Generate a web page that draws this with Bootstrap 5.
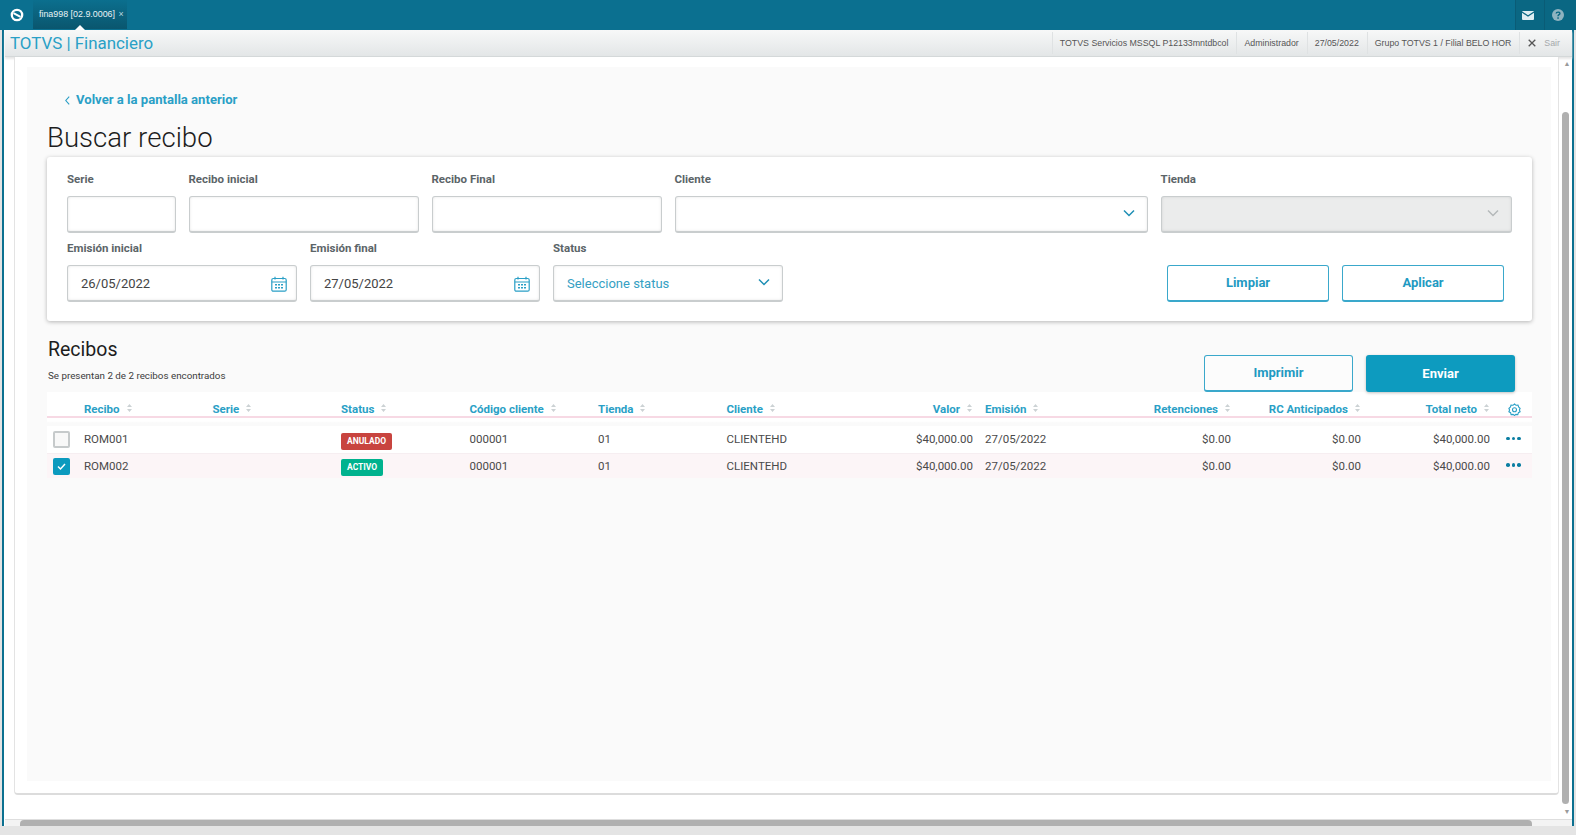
<!DOCTYPE html>
<html lang="es">
<head>
<meta charset="utf-8">
<title>Buscar recibo</title>
<link href="https://cdn.jsdelivr.net/npm/bootstrap@5.3.0/dist/css/bootstrap.min.css" rel="stylesheet">
<style>
html,body{height:100%;overflow:hidden}
body{background:#e4e4e4;font-family:Roboto,sans-serif;color:#444}
.shell{height:835px;width:1576px}
.tealbar{height:30px;background:#0b7090;color:#fff}
.logo-cell{width:33px;height:29px}
.app-tab{position:relative;width:94px;height:29px;background:linear-gradient(#0b6f8e,#0a566e);font:8.9px "Liberation Sans",sans-serif;padding:9px 0 0 6px;white-space:nowrap;color:#e8f2f5}
.app-tab .x{color:#bcd6df;margin-left:1px}
.app-tab::after{content:"";position:absolute;left:42px;bottom:-1px;border:5px solid transparent;border-top:0;border-bottom-color:#fff}
.top-cell{height:30px;background:#0a6783;border-left:1px solid #0a5c76}
.frame{height:796px;margin:0 2px;border-left:2px solid #0b7090;border-right:2px solid #0b7090;background:#fff}
.subbar{height:27px;margin-left:1px;background:linear-gradient(#f7f8f8,#e3e6e7);border-bottom:1px solid #d4d8d9;box-shadow:0 2px 2px #e6e6e6}
.brand{font:16.9px Roboto,sans-serif;color:#29a0c6;padding-left:5px}
.sub-item{font:8.8px "Liberation Sans",sans-serif;color:#555;height:22px;display:flex;align-items:center;border-left:1px solid #dfe2e3;padding:0 8px 0 7px;white-space:nowrap}
.sub-item.sair{color:#a5a9ab;padding:0 12px 0 8px}
.workarea{height:762px}
.outer-card{width:1551px;height:738px;margin-left:10px;background:#fff;border:1px solid #e3e3e3;border-top:0;border-bottom:2px solid #dcdcdc;border-radius:0 0 4px 4px;padding-top:10px;padding-left:12px}
.panel{width:1524px;height:714px;background:#fafafa;padding:21px 0 0 20px}
.back-link{font-size:13.1px;font-weight:700;color:#2a9fc6;padding-left:18px;line-height:24px;text-decoration:none}
.back-link svg{margin-right:6px}
.page-title{font-size:27.6px;font-weight:300;color:#1d1d1d;margin:8px 0 0 0;line-height:36px}
.filter-card{width:1485px;height:164px;margin-top:1px;background:#fff;border-radius:3px;box-shadow:0 1px 4px rgba(0,0,0,.28);padding:12px 20px 0 20px}
.filter-row{--bs-gutter-x:13px;width:1458px;margin:0 0 0 -6.5px}
.lab{font-size:11.5px;font-weight:700;color:#5b6468;line-height:20px;height:27px;margin:0}
.field{position:relative;height:37px;margin-bottom:5px}
.field .form-control{height:37px;border:1px solid #c9cdce;border-bottom-width:2px;border-radius:3px;box-shadow:inset 0 0 3px rgba(0,0,0,.1);font-size:13px;color:#444;padding:0 13px;background:#fff}
.field .form-control:disabled{background:#ebecec}
.field .form-control::placeholder{color:#35a0c3;opacity:1}
.field svg{position:absolute;right:10px;top:11px}
.field svg.chev{right:13px}
.filter-actions{padding-top:27px}
.aplicar{margin:0 8px 0 13px}
.btn-line{width:162px;height:37px;border:1px solid #3aa8cb;border-bottom-width:2px;border-radius:3px;background:#fff;color:#1f9ac2;font-size:13px;font-weight:700;padding:0}
.btn-line:hover{background:#fff;color:#1f9ac2}
.btn-fill{width:149px;height:37px;background:#0d9bbf;border:0;border-radius:3px;color:#fff;font-size:13px;font-weight:700;padding:0;box-shadow:0 1px 3px rgba(0,0,0,.25)}
.btn-fill:hover{background:#0d9bbf;color:#fff}
.list-head{height:71px;width:1468px}
.list-title{font-size:19.5px;font-weight:400;color:#1d1d1d;margin:16px 0 0 1px;line-height:26px}
.list-sub{font-size:9.8px;color:#3c3c3c;margin:6px 0 0 1px;line-height:14px}
.list-btns{margin-top:34px;gap:13px}
.list-btns .btn-line{width:149px;background:#fcfcfc}
.data-table{width:1485px;table-layout:fixed;border-collapse:separate;border-spacing:0;margin:0}
.data-table th{height:26px;background:#fff;border-bottom:2px solid #f7d9e4;font-size:11.5px;line-height:14px;font-weight:700;color:#2a9fc6;padding:0 6px;white-space:nowrap;vertical-align:bottom}
.data-table .gap-row td{height:8px;padding:0;background:linear-gradient(#fff 40%,#fafafa 60%)}
.data-table td{font-size:11.5px;color:#4a4a4a;padding:1px 6px 0;white-space:nowrap;vertical-align:middle}
.data-table .r-one td{height:28px;background:#fff;border-bottom:1px solid #f6eef1}
.data-table .r-two td{height:24px;background:#fcf5f7}
.sorter{display:inline-block;width:7px;height:10px;margin-left:6px;vertical-align:0}
.chk{display:block;width:17px;height:17px;border-radius:2px;margin-top:-1px}
.chk-off{border:2px solid #c6cacb;background:#f8f8f8}
.chk-on{background:#0c9abe;padding:3px 0 0 3px}
.badge-state{display:inline-block;font-size:8.5px;font-weight:700;color:#fff;border-radius:2px;line-height:17px;padding:0 6px;vertical-align:middle;margin-top:2px}
.st-red{background:#c8443f}
.st-green{background:#00b28e}
.dots{display:flex;gap:2px;padding-left:4px;margin-top:-3px}
.dots i{width:3.6px;height:3.6px;border-radius:50%;background:#0b7ea2}
.vbar{width:13px;padding-left:3px}
.vthumb{width:7px;height:692px;background:#b0b0b0;border-radius:4px;margin-top:55px}
.hbar{height:7px;margin-left:1px;background:#f3f3f3;border-top:1px solid #dedede}
.hthumb{width:1512px;height:6px;background:#b0b0b0;border-radius:4px 4px 0 0;margin-left:15px}
.arr{color:#9a9a9a;font-size:7px;line-height:8px;text-align:center}
.arr-up{height:0;line-height:14px}
.mail-cell{width:29px;padding-right:4px}
.help-cell{width:32px;padding-right:6px}
.gear{display:block;margin:-2px 0 0 6px}
.row-check{display:block;width:11px;height:11px}
</style>
</head>
<body>
<div class="shell d-flex flex-column">
  <div class="tealbar d-flex align-items-start">
    <div class="logo-cell d-flex justify-content-center pt-1">
      <svg width="14" height="14" viewBox="0 0 14 14" class="mt-1"><circle cx="7" cy="7" r="5.2" fill="none" stroke="#fff" stroke-width="2.3"/><path d="M3.5 5.2 10.5 8.8" stroke="#fff" stroke-width="2"/></svg>
    </div>
    <div class="app-tab">fina998 [02.9.0006] <span class="x">×</span></div>
    <div class="flex-grow-1"></div>
    <div class="top-cell mail-cell d-flex align-items-center justify-content-center">
      <svg width="12" height="9" viewBox="0 0 12 9"><rect width="12" height="9" rx="1" fill="#dfeef3"/><path d="M0 1 6 5 12 1" fill="none" stroke="#0a6783" stroke-width="1.2"/></svg>
    </div>
    <div class="top-cell help-cell d-flex align-items-center justify-content-center">
      <svg width="12" height="12" viewBox="0 0 12 12"><circle cx="6" cy="6" r="6" fill="#8fb3c0"/><path d="M4.2 4.6C4.2 2.6 7.9 2.6 7.9 4.5 7.9 5.7 6 5.7 6 7.3" fill="none" stroke="#0a6783" stroke-width="1.4"/><rect x="5.3" y="8.3" width="1.5" height="1.5" fill="#0a6783"/></svg>
    </div>
  </div>
  <div class="frame d-flex flex-column">
    <div class="subbar d-flex align-items-center justify-content-between">
      <div class="brand">TOTVS | Financiero</div>
      <div class="d-flex align-items-center">
        <div class="sub-item">TOTVS Servicios MSSQL P12133mntdbcol</div>
        <div class="sub-item">Administrador</div>
        <div class="sub-item">27/05/2022</div>
        <div class="sub-item">Grupo TOTVS 1 / Filial BELO HOR</div>
        <div class="sub-item sair">
          <svg width="8" height="8" viewBox="0 0 8 8" class="me-2"><path d="M.7.7 7.3 7.3M7.3.7.7 7.3" stroke="#555" stroke-width="1.3"/></svg>Sair
        </div>
      </div>
    </div>
    <div class="workarea d-flex justify-content-between">
      <div class="outer-card">
        <div class="panel">
          <a class="back-link d-flex align-items-center" href="#">
            <svg width="5" height="9" viewBox="0 0 5 9"><path d="M4.2.7.8 4.5 4.2 8.3" fill="none" stroke="#2a9fc6" stroke-width="1.1"/></svg>Volver a la pantalla anterior
          </a>
          <h1 class="page-title">Buscar recibo</h1>
          <div class="filter-card">
            <div class="row filter-row">
              <div class="col-1"><div class="lab">Serie</div><div class="field"><input class="form-control"></div></div>
              <div class="col-2"><div class="lab">Recibo inicial</div><div class="field"><input class="form-control"></div></div>
              <div class="col-2"><div class="lab">Recibo Final</div><div class="field"><input class="form-control"></div></div>
              <div class="col-4"><div class="lab">Cliente</div><div class="field"><input class="form-control">
                <svg class="chev" width="12" height="12" viewBox="0 0 12 12"><path d="M1 3.5 6 8.5 11 3.5" fill="none" stroke="#1f8fb5" stroke-width="1.5"/></svg></div></div>
              <div class="col-3"><div class="lab">Tienda</div><div class="field"><input class="form-control" disabled>
                <svg class="chev" width="12" height="12" viewBox="0 0 12 12"><path d="M1 3.5 6 8.5 11 3.5" fill="none" stroke="#b5b9ba" stroke-width="1.5"/></svg></div></div>
            </div>
            <div class="row filter-row">
              <div class="col-2"><div class="lab">Emisión inicial</div><div class="field"><input class="form-control" value="26/05/2022">
                <svg width="16" height="16" viewBox="0 0 16 16"><g fill="none" stroke="#2a9fc6" stroke-width="1.2"><rect x=".8" y="2.5" width="14.4" height="12.7" rx="1.5"/><path d="M.8 6H15.2M4 .7V3.5M12 .7V3.5"/></g><path d="M4 8h2v1.5H4zM7 8h2v1.5H7zM10 8h2v1.5h-2zM4 11h2v1.5H4zM7 11h2v1.5H7zM10 11h2v1.5h-2z" fill="#2a9fc6"/></svg></div></div>
              <div class="col-2"><div class="lab">Emisión final</div><div class="field"><input class="form-control" value="27/05/2022">
                <svg width="16" height="16" viewBox="0 0 16 16"><g fill="none" stroke="#2a9fc6" stroke-width="1.2"><rect x=".8" y="2.5" width="14.4" height="12.7" rx="1.5"/><path d="M.8 6H15.2M4 .7V3.5M12 .7V3.5"/></g><path d="M4 8h2v1.5H4zM7 8h2v1.5H7zM10 8h2v1.5h-2zM4 11h2v1.5H4zM7 11h2v1.5H7zM10 11h2v1.5h-2z" fill="#2a9fc6"/></svg></div></div>
              <div class="col-2"><div class="lab">Status</div><div class="field"><input class="form-control" placeholder="Seleccione status">
                <svg class="chev" width="12" height="12" viewBox="0 0 12 12"><path d="M1 3.5 6 8.5 11 3.5" fill="none" stroke="#1f8fb5" stroke-width="1.5"/></svg></div></div>
              <div class="col-6 d-flex justify-content-end filter-actions">
                <button class="btn btn-line">Limpiar</button>
                <button class="btn btn-line aplicar">Aplicar</button>
              </div>
            </div>
          </div>
          <div class="list-head d-flex justify-content-between">
            <div>
              <h2 class="list-title">Recibos</h2>
              <p class="list-sub">Se presentan 2 de 2 recibos encontrados</p>
            </div>
            <div class="list-btns d-flex">
              <button class="btn btn-line">Imprimir</button>
              <button class="btn btn-fill">Enviar</button>
            </div>
          </div>
          <table class="data-table">
            <colgroup><col style="width:31px"><col style="width:128.5px"><col style="width:128.5px"><col style="width:128.5px"><col style="width:128.5px"><col style="width:128.5px"><col style="width:128.5px"><col style="width:130px"><col style="width:129px"><col style="width:129px"><col style="width:130px"><col style="width:129px"><col style="width:36px"></colgroup>
            <thead>
              <tr>
                <th></th>
                <th>Recibo<svg class="sorter" viewBox="0 0 7 10"><path d="M3.5 1 6 4H1zM3.5 9 1 6h5z" fill="#ccd2d4"/></svg></th>
                <th>Serie<svg class="sorter" viewBox="0 0 7 10"><path d="M3.5 1 6 4H1zM3.5 9 1 6h5z" fill="#ccd2d4"/></svg></th>
                <th>Status<svg class="sorter" viewBox="0 0 7 10"><path d="M3.5 1 6 4H1zM3.5 9 1 6h5z" fill="#ccd2d4"/></svg></th>
                <th>Código cliente<svg class="sorter" viewBox="0 0 7 10"><path d="M3.5 1 6 4H1zM3.5 9 1 6h5z" fill="#ccd2d4"/></svg></th>
                <th>Tienda<svg class="sorter" viewBox="0 0 7 10"><path d="M3.5 1 6 4H1zM3.5 9 1 6h5z" fill="#ccd2d4"/></svg></th>
                <th>Cliente<svg class="sorter" viewBox="0 0 7 10"><path d="M3.5 1 6 4H1zM3.5 9 1 6h5z" fill="#ccd2d4"/></svg></th>
                <th class="text-end">Valor<svg class="sorter" viewBox="0 0 7 10"><path d="M3.5 1 6 4H1zM3.5 9 1 6h5z" fill="#ccd2d4"/></svg></th>
                <th>Emisión<svg class="sorter" viewBox="0 0 7 10"><path d="M3.5 1 6 4H1zM3.5 9 1 6h5z" fill="#ccd2d4"/></svg></th>
                <th class="text-end">Retenciones<svg class="sorter" viewBox="0 0 7 10"><path d="M3.5 1 6 4H1zM3.5 9 1 6h5z" fill="#ccd2d4"/></svg></th>
                <th class="text-end">RC Anticipados<svg class="sorter" viewBox="0 0 7 10"><path d="M3.5 1 6 4H1zM3.5 9 1 6h5z" fill="#ccd2d4"/></svg></th>
                <th class="text-end">Total neto<svg class="sorter" viewBox="0 0 7 10"><path d="M3.5 1 6 4H1zM3.5 9 1 6h5z" fill="#ccd2d4"/></svg></th>
                <th><svg class="gear" width="13" height="13" viewBox="0 0 13 13"><path d="M6.5 1 8 2.3 10 2.1 10.6 4 12.1 5.3 11.4 7 12.1 8.7 10.4 9.7 9.8 11.6 7.9 11.4 6.5 12.5 5 11.4 3.1 11.600 2.6 9.7.9 8.7 1.6 7 .9 5.3 2.5 4 3 2.1 5 2.3Z" fill="none" stroke="#2a9fc6" stroke-width="1.1"/><circle cx="6.5" cy="6.8" r="2" fill="none" stroke="#2a9fc6" stroke-width="1.1"/></svg></th>
              </tr>
            </thead>
            <tbody>
              <tr class="gap-row"><td colspan="13"></td></tr>
              <tr class="r-one">
                <td><span class="chk chk-off"></span></td>
                <td>ROM001</td><td></td>
                <td><span class="badge-state st-red">ANULADO</span></td>
                <td>000001</td><td>01</td><td>CLIENTEHD</td>
                <td class="text-end">$40,000.00</td><td>27/05/2022</td>
                <td class="text-end">$0.00</td><td class="text-end">$0.00</td><td class="text-end">$40,000.00</td>
                <td><div class="dots"><i></i><i></i><i></i></div></td>
              </tr>
              <tr class="r-two">
                <td><span class="chk chk-on"><svg class="row-check" viewBox="0 0 11 11"><path d="M2 5.5 4.5 8 9 3" fill="none" stroke="#fff" stroke-width="1.5"/></svg></span></td>
                <td>ROM002</td><td></td>
                <td><span class="badge-state st-green">ACTIVO</span></td>
                <td>000001</td><td>01</td><td>CLIENTEHD</td>
                <td class="text-end">$40,000.00</td><td>27/05/2022</td>
                <td class="text-end">$0.00</td><td class="text-end">$0.00</td><td class="text-end">$40,000.00</td>
                <td><div class="dots"><i></i><i></i><i></i></div></td>
              </tr>
            </tbody>
          </table>
        </div>
      </div>
      <div class="vbar d-flex flex-column">
        <div class="arr arr-up">▲</div>
        <div class="vthumb"></div>
        <div class="arr mt-1">▼</div>
      </div>
    </div>
    <div class="hbar"><div class="hthumb"></div></div>
  </div>
</div>
<script src="https://cdn.jsdelivr.net/npm/bootstrap@5.3.0/dist/js/bootstrap.bundle.min.js"></script>
</body>
</html>
